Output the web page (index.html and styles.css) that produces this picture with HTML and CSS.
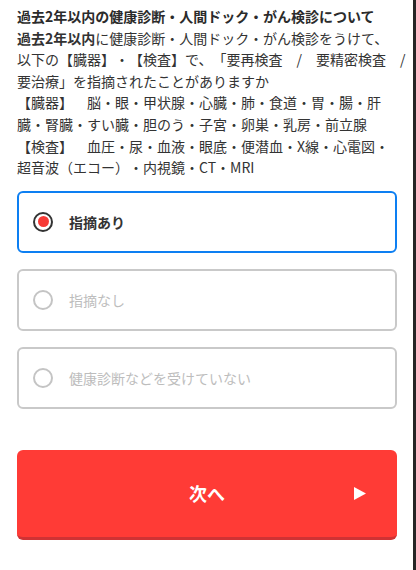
FILE: index.html
```html
<!DOCTYPE html>
<html lang="ja">
<head>
<meta charset="utf-8">
<title>質問</title>
<link rel="stylesheet" href="styles.css">
</head>
<body>
<div class="page">
  <div class="question">
    <p class="q-title">過去2年以内の健康診断・人間ドック・がん検診について</p>
    <p class="q-body"><strong>過去2年以内</strong>に健康診断・人間ドック・がん検診をうけて、<br>以下の【臓器】・【検査】で、「要再検査　/　要精密検査　/<br>要治療」を指摘されたことがありますか<br>【臓器】　脳・眼・甲状腺・心臓・肺・食道・胃・腸・肝<br>臓・腎臓・すい臓・胆のう・子宮・卵巣・乳房・前立腺<br>【検査】　血圧・尿・血液・眼底・便潜血・X線・心電図・<br>超音波（エコー）・内視鏡・CT・MRI</p>
  </div>
  <div class="options">
    <div class="option selected"><span class="radio"></span><span class="label">指摘あり</span></div>
    <div class="option"><span class="radio"></span><span class="label">指摘なし</span></div>
    <div class="option"><span class="radio"></span><span class="label">健康診断などを受けていない</span></div>
  </div>
  <div class="next-wrap">
    <div class="next-btn">
      <span class="next-spacer"></span>
      <span class="next-text">次へ</span>
      <svg class="next-arrow" width="12" height="13" viewBox="0 0 12 13"><polygon points="0,0 12,6.5 0,13" fill="#fff"/></svg>
    </div>
  </div>
</div>
</body>
</html>
```
FILE: styles.css
```css
html, body {
  margin: 0;
  padding: 0;
  background: #fff;
}
body {
  font-family: "Noto Sans CJK JP", "Noto Sans", sans-serif;
  color: #333;
  text-spacing-trim: space-all;
}
.page {
  width: 416px;
  min-height: 570px;
  box-sizing: border-box;
  border-right: 3px solid #262626;
}
.question {
  padding: 6px 0 0 17px;
}
.q-title,
.q-body {
  margin: 0;
  font-size: 14px;
  line-height: 21.6px;
  white-space: nowrap;
}
.q-title {
  font-weight: 700;
  color: #2b2b2b;
}
.q-body strong {
  font-weight: 700;
}
.options {
  margin-top: 12px;
  padding: 0 16px 0 17px;
  display: flex;
  flex-direction: column;
  gap: 16px;
}
.option {
  height: 62px;
  box-sizing: border-box;
  border: 2px solid #c9c9c9;
  border-radius: 6px;
  display: flex;
  align-items: center;
  padding-left: 14px;
  gap: 16px;
  color: #bdbdbd;
  font-size: 14px;
}
.radio {
  width: 20px;
  height: 20px;
  box-sizing: border-box;
  border: 2px solid #c4c4c4;
  border-radius: 50%;
  display: flex;
  align-items: center;
  justify-content: center;
  flex: none;
}
.option.selected {
  border-color: #0d7ff2;
  color: #333;
}
.option.selected .label {
  font-weight: 700;
}
.option.selected .radio {
  border-color: #333;
}
.option.selected .radio::after {
  content: "";
  width: 11px;
  height: 11px;
  border-radius: 50%;
  background: #f73a36;
}
.next-wrap {
  margin-top: 41px;
  padding: 0 16px 0 17px;
}
.next-btn {
  height: 90px;
  box-sizing: border-box;
  background: #ff3b36;
  border-bottom: 3px solid #cf3234;
  border-radius: 6px;
  display: grid;
  grid-template-columns: 1fr auto 1fr;
  align-items: center;
  color: #fff;
}
.next-text {
  font-size: 18px;
  font-weight: 700;
}
.next-arrow {
  justify-self: end;
  margin-right: 31px;
}
```
